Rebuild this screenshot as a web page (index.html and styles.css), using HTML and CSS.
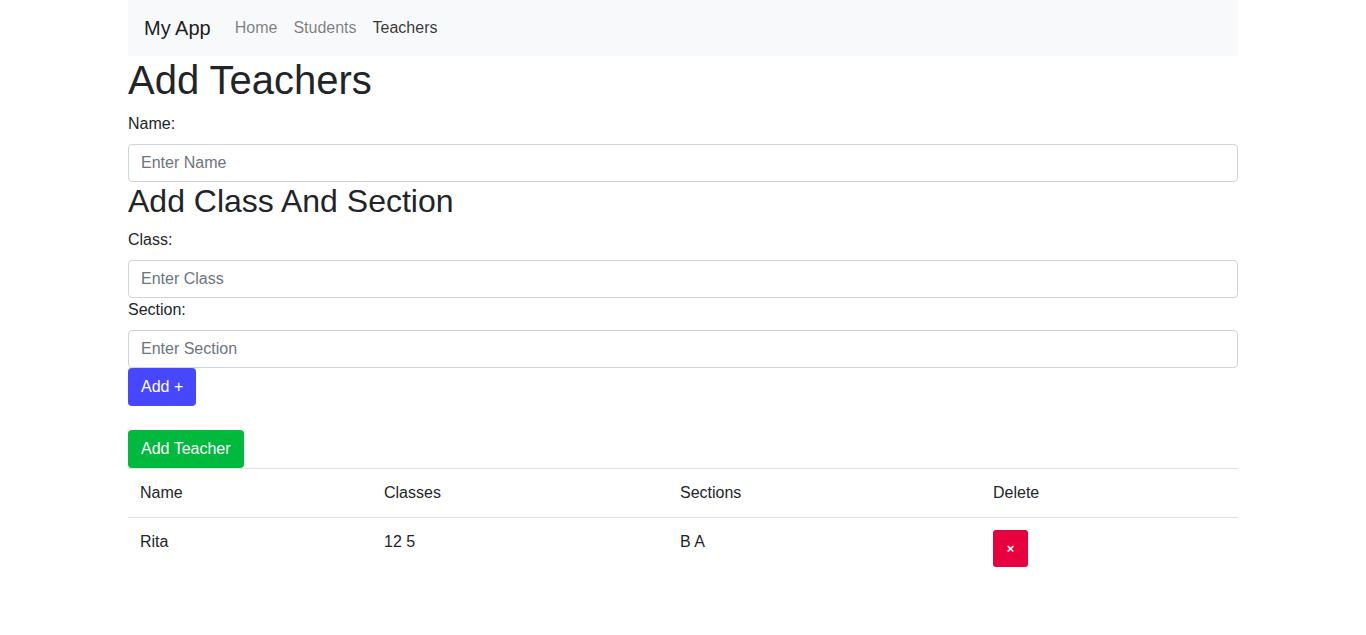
FILE: index.html
```html
<!DOCTYPE html>
<html lang="en">
<head>
<meta charset="utf-8">
<title>My App</title>
<link rel="stylesheet" href="styles.css">
</head>
<body>
<div class="container">
  <nav class="navbar">
    <span class="brand">My App</span>
    <a class="nav-link">Home</a>
    <a class="nav-link">Students</a>
    <a class="nav-link active">Teachers</a>
  </nav>
  <h1>Add Teachers</h1>
  <label class="label">Name:</label>
  <input class="input" placeholder="Enter Name">
  <h2>Add Class And Section</h2>
  <label class="label">Class:</label>
  <input class="input" placeholder="Enter Class">
  <label class="label">Section:</label>
  <input class="input" placeholder="Enter Section">
  <div class="row-btn"><button class="btn btn-blue">Add +</button></div>
  <div class="row-btn gap"><button class="btn btn-green">Add Teacher</button></div>
  <table class="table">
    <tr>
      <td class="c1">Name</td>
      <td class="c2">Classes</td>
      <td class="c3">Sections</td>
      <td class="c4">Delete</td>
    </tr>
    <tr>
      <td>Rita</td>
      <td>12 5</td>
      <td>B A</td>
      <td><button class="btn-del">×</button></td>
    </tr>
  </table>
</div>
</body>
</html>
```
FILE: styles.css
```css
* { box-sizing: border-box; }
body {
  margin: 0;
  font-family: "Liberation Sans", Arial, sans-serif;
  font-size: 16px;
  line-height: 1.5;
  color: #212529;
  background: #fff;
}
.container {
  width: 1140px;
  margin: 0 auto;
  padding: 0 15px;
}
.navbar {
  display: flex;
  align-items: center;
  background: #f8f9fa;
  height: 56px;
  padding: 8px 16px;
}
.brand {
  font-size: 20px;
  line-height: 30px;
  margin-right: 16px;
  color: rgba(0,0,0,.9);
}
.nav-link {
  padding: 8px;
  color: rgba(0,0,0,.5);
}
.nav-link.active { color: rgba(0,0,0,.8); }
h1, h2 {
  margin: 0 0 8px;
  font-weight: 500;
  line-height: 1.2;
}
h1 { font-size: 40px; }
h2 { font-size: 32px; }
.label {
  display: block;
  margin-bottom: 8px;
}
.input {
  display: block;
  width: 100%;
  height: 38px;
  padding: 6px 12px;
  font: inherit;
  color: #495057;
  border: 1px solid #ced4da;
  border-radius: 4px;
  background: #fff;
}
.input::placeholder { color: #6c757d; }
.row-btn { display: flex; }
.row-btn.gap { margin-top: 24px; }
.btn {
  font: inherit;
  color: #fff;
  border: 1px solid transparent;
  border-radius: 4px;
  height: 38px;
  padding: 6px 12px;
}
.btn-blue { background: #4747ff; }
.btn-green { background: #00b93d; }
.table {
  width: 100%;
  border-collapse: collapse;
}
.table td {
  padding: 12px;
  border-top: 1px solid #dee2e6;
  vertical-align: top;
}
.c1 { width: 244px; }
.c2 { width: 296px; }
.c3 { width: 313px; }
.btn-del {
  width: 35px;
  height: 37px;
  background: #e9003f;
  color: #fff;
  border: none;
  border-radius: 3px;
  font-family: "Liberation Sans", Arial, sans-serif;
  font-size: 13px;
  font-weight: bold;
  padding: 0;
}
```
